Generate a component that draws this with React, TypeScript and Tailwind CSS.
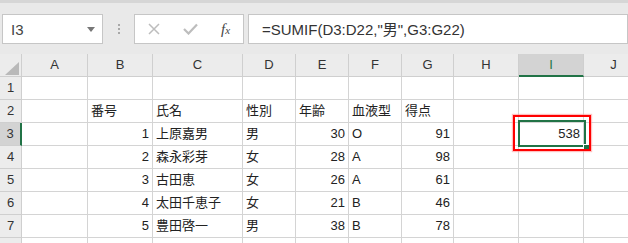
import React from "react";

const cols = [
  { k: "A", w: 66 },
  { k: "B", w: 65 },
  { k: "C", w: 90 },
  { k: "D", w: 53 },
  { k: "E", w: 53 },
  { k: "F", w: 53 },
  { k: "G", w: 52 },
  { k: "H", w: 65 },
  { k: "I", w: 65 },
  { k: "J", w: 60 },
];

type Cell = { t: string; r?: boolean };
const data: Record<number, Record<string, Cell>> = {
  2: { B: { t: "番号" }, C: { t: "氏名" }, D: { t: "性別" }, E: { t: "年齢" }, F: { t: "血液型" }, G: { t: "得点" } },
  3: { B: { t: "1", r: true }, C: { t: "上原嘉男" }, D: { t: "男" }, E: { t: "30", r: true }, F: { t: "O" }, G: { t: "91", r: true }, I: { t: "538", r: true } },
  4: { B: { t: "2", r: true }, C: { t: "森永彩芽" }, D: { t: "女" }, E: { t: "28", r: true }, F: { t: "A" }, G: { t: "98", r: true } },
  5: { B: { t: "3", r: true }, C: { t: "古田恵" }, D: { t: "女" }, E: { t: "26", r: true }, F: { t: "A" }, G: { t: "61", r: true } },
  6: { B: { t: "4", r: true }, C: { t: "太田千恵子" }, D: { t: "女" }, E: { t: "21", r: true }, F: { t: "B" }, G: { t: "46", r: true } },
  7: { B: { t: "5", r: true }, C: { t: "豊田啓一" }, D: { t: "男" }, E: { t: "38", r: true }, F: { t: "B" }, G: { t: "78", r: true } },
};

const font = { fontFamily: '"Liberation Sans", "Noto Sans CJK JP", sans-serif' };

export default function App() {
  return (
    <div className="relative w-[628px] h-[243px] overflow-hidden bg-white text-[#222]" style={font}>
      {/* toolbar */}
      <div className="h-[54px] bg-[#e9e9e9] border-t-[3px] border-[#d6d6d6] flex items-start pt-[11px]">
        <div className="ml-[2px] w-[101px] h-[30px] bg-white border border-[#c6c6c6] flex items-center justify-between pl-[8px] pr-[7px]">
          <span className="text-[15px] text-[#444] leading-none">I3</span>
          <svg width="8" height="5" viewBox="0 0 8 5"><path d="M0 0 L8 0 L4 5 Z" fill="#777" /></svg>
        </div>
        <div className="w-[31px] h-[30px] flex flex-col items-center justify-center gap-[2px]">
          <div className="w-[2px] h-[2px] bg-[#a8a8a8]" />
          <div className="w-[2px] h-[2px] bg-[#a8a8a8]" />
          <div className="w-[2px] h-[2px] bg-[#a8a8a8]" />
        </div>
        <div className="w-[110px] h-[30px] bg-white border border-[#c6c6c6] flex items-center">
          <svg className="ml-[13px]" width="12" height="12" viewBox="0 0 12 12"><path d="M1 1 L11 11 M11 1 L1 11" stroke="#bdbdbd" strokeWidth="1.5" /></svg>
          <svg className="ml-[23px]" width="15" height="12" viewBox="0 0 15 12"><path d="M1 6 L5.5 10.5 L14 1.5" stroke="#bdbdbd" strokeWidth="2.2" fill="none" /></svg>
          <span className="ml-[23px] text-[15px] italic text-[#444]" style={{ fontFamily: '"Liberation Serif", serif' }}>f<span className="text-[11px]">x</span></span>
        </div>
        <div className="ml-[4px] flex-1 h-[30px] bg-white border border-[#c6c6c6] flex items-center pl-[13px]">
          <span className="text-[15px] text-[#333] leading-none">=SUMIF(D3:D22,"男",G3:G22)</span>
        </div>
      </div>

      {/* grid */}
      <div className="flex flex-col">
        <div className="flex h-[23px] bg-[#ececec]">
          <div className="w-[22px] shrink-0 border-r border-b border-[#cfcfcf] relative">
            <svg className="absolute left-[5px] top-[8px]" width="14" height="13" viewBox="0 0 14 13"><path d="M14 0 L14 13 L0 13 Z" fill="#b9b9b9" /></svg>
          </div>
          {cols.map((c) => {
            const sel = c.k === "I";
            return (
              <div
                key={c.k}
                style={{ width: c.w }}
                className={
                  sel
                    ? "shrink-0 flex items-center justify-center border-r border-[#cfcfcf] border-b-[2px] border-b-[#217346] bg-[#d3d3d3] text-[#217346] text-[13px]"
                    : "shrink-0 flex items-center justify-center border-r border-b border-[#cfcfcf] text-[#333] text-[13px]"
                }
              >
                {c.k}
              </div>
            );
          })}
        </div>
        {[1, 2, 3, 4, 5, 6, 7, 8].map((r) => (
          <div key={r} className="flex h-[23px]">
            <div
              className={
                r === 3
                  ? "w-[22px] shrink-0 flex items-center justify-center bg-[#d3d3d3] border-b border-[#cfcfcf] border-r-[2px] border-r-[#217346] text-[13px] text-[#333]"
                  : "w-[22px] shrink-0 flex items-center justify-center bg-[#ececec] border-r border-b border-[#cfcfcf] text-[13px] text-[#333]"
              }
            >
              {r < 8 ? r : ""}
            </div>
            {cols.map((c) => {
              const cell = data[r]?.[c.k];
              return (
                <div
                  key={c.k}
                  style={{ width: c.w }}
                  className={
                    cell?.r
                      ? "shrink-0 flex items-center justify-end pr-[3px] border-r border-b border-[#d4d4d4] text-[13px] whitespace-nowrap"
                      : "shrink-0 flex items-center justify-start pl-[3px] border-r border-b border-[#d4d4d4] text-[13px] whitespace-nowrap"
                  }
                >
                  {cell?.t ?? ""}
                </div>
              );
            })}
          </div>
        ))}
      </div>

      {/* selection overlays */}
      <div className="absolute left-[518px] top-[120px] w-[68px] h-[27px] border-[2px] border-[#217346]" />
      <div className="absolute left-[583px] top-[144px] w-[5px] h-[5px] bg-[#217346] border border-white box-content" />
      <div className="absolute left-[513px] top-[115px] w-[78px] h-[36px] border-[2px] border-[#ff0000] shadow-[0_0_1px_1px_rgba(255,150,150,0.6)]" />
    </div>
  );
}
